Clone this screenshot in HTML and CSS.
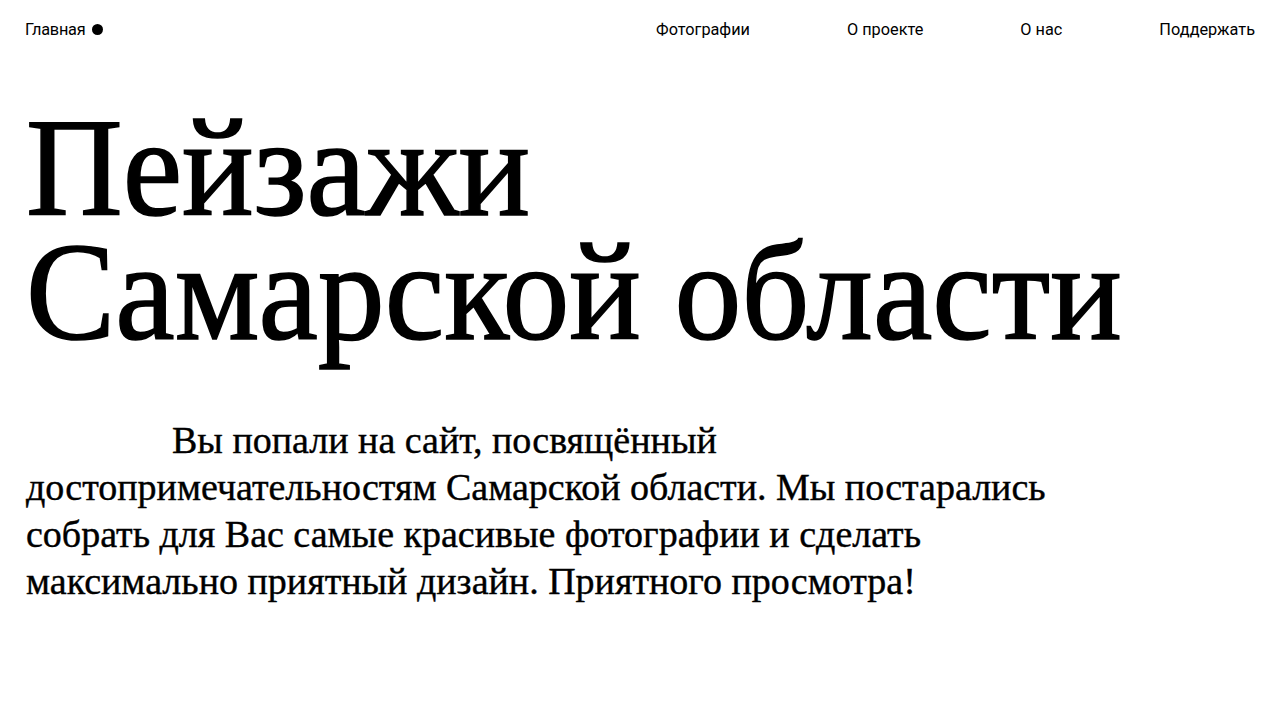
FILE: index.html
```html
<!DOCTYPE html>
<html lang="ru">
<head>
<meta charset="utf-8">
<title>Пейзажи Самарской области</title>
<link rel="stylesheet" href="styles.css">
</head>
<body>
<header class="topbar">
  <a class="home" href="#">Главная <span class="dot"></span></a>
  <nav class="menu">
    <a href="#">Фотографии</a>
    <a href="#">О проекте</a>
    <a href="#">О нас</a>
    <a href="#">Поддержать</a>
  </nav>
</header>
<main class="hero">
  <h1 class="title"><span class="squeeze">Пейзажи<br>Самарской области</span></h1>
  <p class="intro"><span class="lead">Вы попали на сайт, посвящённый</span><br>достопримечательностям Самарской области. Мы постарались<br>собрать для Вас самые красивые фотографии и сделать<br>максимально приятный дизайн. Приятного просмотра!</p>
</main>
</body>
</html>
```
FILE: styles.css
```css
* { box-sizing: border-box; }
html, body { margin: 0; padding: 0; background: #fff; color: #000; }
body { font-family: "Roboto", "Inter", sans-serif; }
a { color: #000; text-decoration: none; }

.topbar {
  display: flex;
  justify-content: space-between;
  align-items: center;
  height: 58px;
  padding: 0 25px;
  font-size: 16.3px;
}
.home { display: flex; align-items: center; gap: 6px; letter-spacing: -0.2px; }
.dot { width: 11px; height: 11px; border-radius: 50%; background: #000; display: inline-block; }
.menu { display: flex; gap: 97px; }

.hero { padding: 0 26px; }
.title {
  margin: 48px 0 0;
  font-family: "Liberation Serif", serif;
  font-weight: 400;
  font-size: 140px;
  line-height: 124px;
  white-space: nowrap;
  -webkit-text-stroke: 1.6px #000;
}
.squeeze { display: inline-block; transform: scaleX(0.956); transform-origin: left top; }
.intro {
  margin: 63px 0 0;
  font-family: "Liberation Serif", serif;
  font-size: 38px;
  line-height: 47px;
  white-space: nowrap;
  -webkit-text-stroke: 0.4px #000;
}
.lead { padding-left: 146px; }
```
